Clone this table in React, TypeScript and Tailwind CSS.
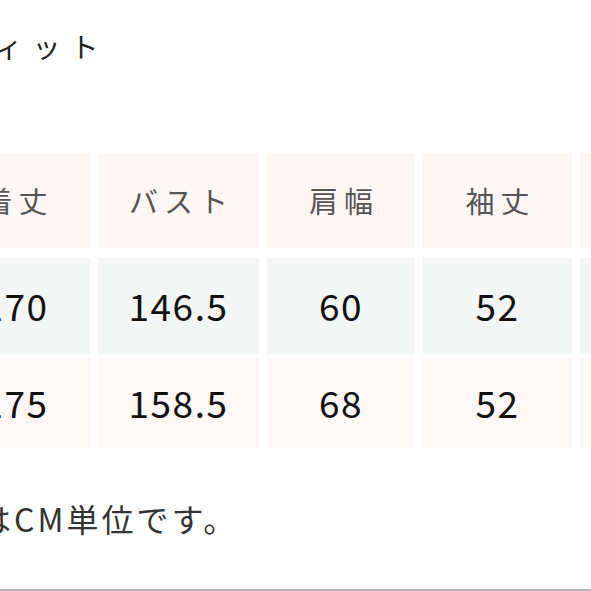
const FONT = { fontFamily: '"Noto Sans CJK JP", "Noto Sans", sans-serif' };

const header = ["着丈", "バスト", "肩幅", "袖丈", "裄丈"];
const rows = [
  ["170", "146.5", "60", "52", "84"],
  ["175", "158.5", "68", "52", "86"],
];

const cols = "grid grid-cols-[149px_161px_148px_149px_149px] gap-x-2";

export default function App() {
  return (
    <div
      className="w-[591px] h-[591px] overflow-hidden bg-white border-b-2 border-[#b3b3b3] pt-[28px]"
      style={FONT}
    >
      <p className="ml-[-43px] text-[28px] leading-[36px] tracking-[10px] text-[#222] whitespace-nowrap">
        フィット
      </p>

      <div className="ml-[-59px] mt-[89px]">
        <div className={cols}>
          {header.map((h) => (
            <div
              key={h}
              className="h-[95px] bg-[#fcf6f5] flex items-center justify-center text-[29px] tracking-[6px] text-[#555]"
            >
              <span className="ml-[6px]">{h}</span>
            </div>
          ))}
        </div>
        <div className={cols + " mt-[10px]"}>
          {rows[0].map((v, i) => (
            <div
              key={i}
              className="h-[96px] bg-[#f4f5f5] flex items-center justify-center text-[37px] tracking-[1.5px] text-[#111]"
            >
              {v}
            </div>
          ))}
        </div>
        <div className={cols + " mt-[4px]"}>
          {rows[1].map((v, i) => (
            <div
              key={i}
              className="h-[90px] bg-[#fdf8f7] flex items-center justify-center text-[37px] tracking-[1.5px] text-[#111]"
            >
              {v}
            </div>
          ))}
        </div>
      </div>

      <p className="ml-[-21px] mt-[50px] text-[32px] leading-[40px] tracking-[3px] text-[#333] whitespace-nowrap">
        はCM単位です。
      </p>
    </div>
  );
}
